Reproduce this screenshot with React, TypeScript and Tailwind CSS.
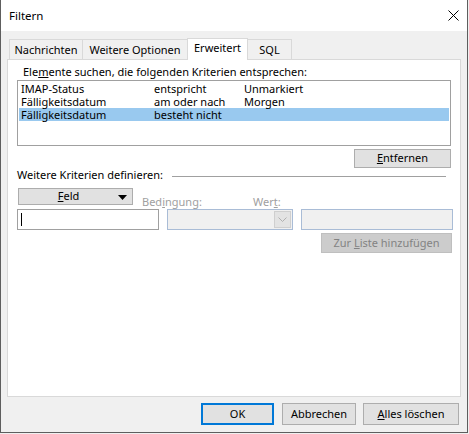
import React from 'react'

const font = { fontFamily: '"Segoe UI", "Noto Sans", sans-serif' }

const tabs = [
  { label: 'Nachrichten', w: 'w-[73px]' },
  { label: 'Weitere Optionen', w: 'w-[105px]' },
  { label: 'Erweitert', w: 'w-[61px]', active: true },
  { label: 'SQL', w: 'w-[44px]' },
]

const rows = [
  ['IMAP-Status', 'entspricht', 'Unmarkiert'],
  ['Fälligkeitsdatum', 'am oder nach', 'Morgen'],
  ['Fälligkeitsdatum', 'besteht nicht', ''],
]

function Btn({ children, className = '' }: { children: React.ReactNode; className?: string }) {
  return (
    <div
      className={
        'flex items-center justify-center bg-[#e1e1e1] border border-[#adadad] text-black ' + className
      }
    >
      {children}
    </div>
  )
}

export default function App() {
  return (
    <div className="w-[469px] h-[434px] bg-[#f0f0f0] text-[11px] text-black" style={font}>
      <div className="w-[468px] h-[433px] flex flex-col border-x border-b border-[#5e5e5e]">
        {/* title bar */}
        <div className="h-[31px] bg-white flex items-center justify-between pl-[8px] pr-[8px]">
          <span className="text-[11.5px] leading-none">Filtern</span>
          <svg width="11" height="11" viewBox="0 0 11 11">
            <path d="M0.5 0.5 L10.5 10.5 M10.5 0.5 L0.5 10.5" stroke="#000" strokeWidth="1" />
          </svg>
        </div>

        {/* body */}
        <div className="flex-1 flex flex-col bg-[#f0f0f0] px-[6px] pt-[7px]">
          {/* tabs */}
          <div className="h-[21px] flex items-end pl-[2px]">
            {tabs.map((t, i) =>
              t.active ? (
                <div
                  key={t.label}
                  className={`${t.w} h-[22px] -mb-px relative z-10 bg-white border-x border-t border-[#d9d9d9] flex items-center justify-center pb-[2px]`}
                >
                  {t.label}
                </div>
              ) : (
                <div
                  key={t.label}
                  className={`${t.w} h-[20px] bg-[#f0f0f0] border-t border-[#d9d9d9] flex items-center justify-center pt-px ${
                    i === 3 ? 'border-r' : 'border-l'
                  }`}
                >
                  {t.label}
                </div>
              )
            )}
          </div>

          {/* panel */}
          <div className="h-[338px] bg-white border border-[#d9d9d9] flex flex-col">
            <div className="pl-[15px] pt-[4px] leading-[15px] h-[19px]">
              Ele<u>m</u>ente suchen, die folgenden Kriterien entsprechen:
            </div>

            <div className="ml-[9px] mt-[1px] w-[434px] h-[66px] border border-[#a0a0a0] pt-[1px] px-px">
              {rows.map((r, i) => (
                <div
                  key={i}
                  className={`h-[13px] leading-[13px] flex pl-[2px] ${i === 2 ? 'bg-[#99c9ef]' : ''}`}
                >
                  <span className="w-[133px]">{r[0]}</span>
                  <span className="w-[90px]">{r[1]}</span>
                  <span>{r[2]}</span>
                </div>
              ))}
            </div>

            <div className="flex justify-end mr-[9px] mt-[3px]">
              <Btn className="w-[97px] h-[19px]">
                <span>
                  <u>E</u>ntfernen
                </span>
              </Btn>
            </div>

            <div className="flex items-center ml-[9px] mr-[14px] h-[12px] mt-px">
              <span className="leading-[12px] whitespace-nowrap">Weitere Kriterien definieren:</span>
              <div className="ml-[9px] flex-1 h-px bg-[#a0a0a0] mt-[2px]" />
            </div>

            <div className="flex h-[21px] ml-[9px] mt-[7px]">
              <Btn className="w-[115px] h-[17px] ml-px relative">
                <span className="ml-[-14px]">
                  <u>F</u>eld
                </span>
                <svg width="9" height="5" viewBox="0 0 9 5" className="absolute right-[5px] top-[6px]">
                  <path d="M0 0 H9 L4.5 5 Z" fill="#000" />
                </svg>
              </Btn>
              <span className="self-end leading-[14px] text-[#a0a0a0] ml-[9px] w-[111px]">
                Bed<u>i</u>ngung:
              </span>
              <span className="self-end leading-[14px] text-[#a0a0a0]">
                Wer<u>t</u>:
              </span>
            </div>

            <div className="flex ml-[9px] h-[21px]">
              <div className="w-[142px] h-[21px] bg-white border border-[#a0a0a0] flex items-center pl-[3px]">
                <div className="w-px h-[13px] bg-black" />
              </div>
              <div className="w-[126px] h-[21px] ml-[8px] bg-[#f0f0f0] border border-[#a9bcd6] flex justify-end p-px">
                <div className="w-[17px] h-full bg-[#e3e3e3] border border-[#cfcfcf] flex items-center justify-center">
                  <svg width="9" height="5" viewBox="0 0 9 5">
                    <path d="M0.5 0.5 L4.5 4.5 L8.5 0.5" stroke="#b0b0b0" fill="none" strokeWidth="1" />
                  </svg>
                </div>
              </div>
              <div className="w-[152px] h-[21px] ml-[8px] bg-[#f0f0f0] border border-[#a9bcd6]" />
            </div>

            <div className="flex justify-end mr-[8px] mt-[3px]">
              <div className="w-[131px] h-[20px] bg-[#cccccc] border border-[#bfbfbf] text-[#838383] flex items-center justify-center">
                <span>
                  Zur <u>L</u>iste hinzufügen
                </span>
              </div>
            </div>
          </div>

          {/* footer */}
          <div className="flex justify-end mt-[6px] pr-[2px]">
            <div className="w-[73px] h-[22px] bg-[#e1e1e1] border-2 border-[#0078d7] flex items-center justify-center">
              OK
            </div>
            <Btn className="w-[74px] h-[22px] ml-[8px]">Abbrechen</Btn>
            <Btn className="w-[96px] h-[22px] ml-[7px]">
              <span>
                <u>A</u>lles löschen
              </span>
            </Btn>
          </div>
        </div>
      </div>
    </div>
  )
}
